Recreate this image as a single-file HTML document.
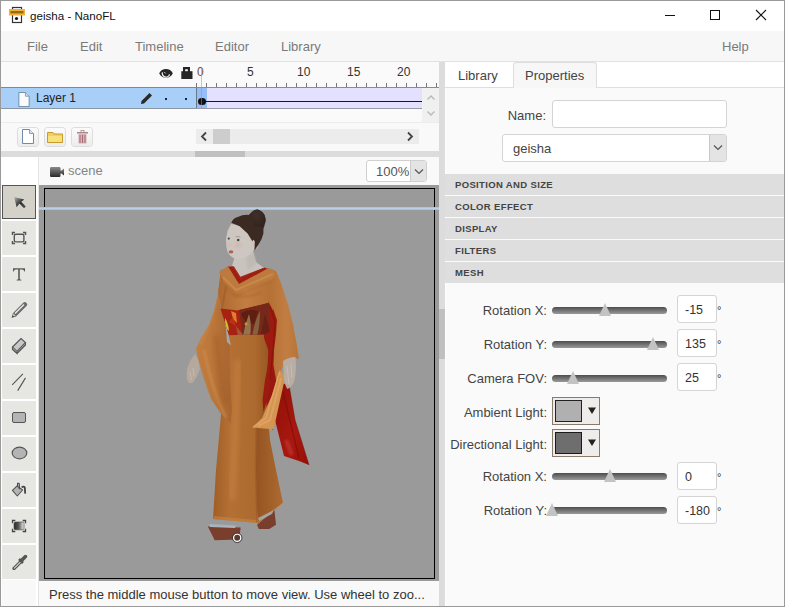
<!DOCTYPE html>
<html><head><meta charset="utf-8">
<style>
*{box-sizing:border-box;margin:0;padding:0}
html,body{width:785px;height:607px;overflow:hidden;background:#fff;font-family:"Liberation Sans",sans-serif}
.a{position:absolute}
#win{position:absolute;left:0;top:0;width:785px;height:607px;border:1px solid #9a9a9a;background:#fff;overflow:hidden}
.menu{position:absolute;top:39px;font-size:13px;color:#7a7a7a}
.tab{position:absolute;top:62px;height:26px;font-size:13px;color:#444}
.sec{position:absolute;left:445px;width:339px;height:21px;background:#dedede;font-size:9.5px;font-weight:bold;color:#444;padding-left:10px;line-height:22px;letter-spacing:0.35px}
.lbl{position:absolute;font-size:13px;color:#444;text-align:right}
.track{position:absolute;left:552px;width:115px;height:7px;border-radius:4px;background:linear-gradient(#4c4c4c,#707070 45%,#9a9a9a)}
.thumb{position:absolute;width:0;height:0;border-left:6px solid transparent;border-right:6px solid transparent;border-bottom:13px solid #c3c3c3}
.inp{position:absolute;left:677px;width:40px;height:28px;border:1px solid #d4d4d4;border-radius:3px;background:#fff;font-size:12.5px;color:#333;padding-left:7px;line-height:28px}
.deg{position:absolute;left:717px;font-size:11px;color:#333}
.tool{position:absolute;left:2px;width:34px;height:34px;background:#e6e6e2}
</style></head><body>

<!-- title bar -->
<div class="a" style="left:0;top:0;width:785px;height:31px;background:#fff"></div>
<svg class="a" style="left:8px;top:6px" width="20" height="18" viewBox="0 0 20 18">
 <rect x="4.5" y="1.5" width="9" height="15" fill="#fff" stroke="#333" stroke-width="1.2"/>
 <rect x="1" y="3" width="16" height="6.5" fill="#f2b234"/>
 <rect x="2.5" y="5" width="13" height="2.4" fill="#4a3008" opacity="0.55"/>
 <circle cx="8.5" cy="12.5" r="1.6" fill="#111"/>
</svg>
<div class="a" style="left:30px;top:9px;font-size:11.6px;color:#111">geisha - NanoFL</div>
<div class="a" style="left:665px;top:15px;width:10px;height:1px;background:#111"></div>
<div class="a" style="left:710px;top:10px;width:10px;height:10px;border:1px solid #111"></div>
<svg class="a" style="left:755px;top:9px" width="12" height="12" viewBox="0 0 12 12"><path d="M1 1L11 11M11 1L1 11" stroke="#111" stroke-width="1.1"/></svg>

<!-- menu bar -->
<div class="a" style="left:0;top:31px;width:785px;height:31px;background:#f7f7f7;border-bottom:1px solid #e2e2e2"></div>
<div class="menu" style="left:27px">File</div>
<div class="menu" style="left:80px">Edit</div>
<div class="menu" style="left:135px">Timeline</div>
<div class="menu" style="left:215px">Editor</div>
<div class="menu" style="left:281px">Library</div>
<div class="menu" style="left:722px">Help</div>

<!-- left: timeline -->
<div class="a" style="left:0;top:62px;width:439px;height:60px;background:#fafafa"></div>
<div class="a" style="left:0;top:122px;width:439px;height:29px;background:#f9f9f9;border-top:1px solid #ececec"></div>
<!-- eye -->
<svg class="a" style="left:159px;top:67.5px" width="14" height="11" viewBox="0 0 14 11">
 <path d="M0.2 5.3C2.3 -0.6 11.7 -0.6 13.8 5.3C11.7 11.2 2.3 11.2 0.2 5.3Z" fill="#262626"/>
 <path d="M3.4 4.3A3.7 3.7 0 0 0 10.6 6.3" stroke="#f2f2f2" stroke-width="1.3" fill="none"/>
 <path d="M5.3 4.1L6.6 5.4" stroke="#e0e0e0" stroke-width="1" fill="none"/>
</svg>
<!-- lock -->
<svg class="a" style="left:181px;top:66px" width="12" height="14" viewBox="0 0 12 14">
 <path d="M3.1 6V2.1H7.9V6" fill="none" stroke="#262626" stroke-width="2.2"/>
 <rect x="0.3" y="5.2" width="11.2" height="7.8" fill="#262626"/>
</svg>
<!-- ruler -->
<div class="a" style="left:196px;top:83px;width:1px;height:4px;background:#777"></div>
<div class="a" style="left:206px;top:83px;width:1px;height:4px;background:#777"></div>
<div class="a" style="left:216px;top:83px;width:1px;height:4px;background:#777"></div>
<div class="a" style="left:226px;top:83px;width:1px;height:4px;background:#777"></div>
<div class="a" style="left:236px;top:83px;width:1px;height:4px;background:#777"></div>
<div class="a" style="left:246px;top:83px;width:1px;height:4px;background:#777"></div>
<div class="a" style="left:256px;top:83px;width:1px;height:4px;background:#777"></div>
<div class="a" style="left:266px;top:83px;width:1px;height:4px;background:#777"></div>
<div class="a" style="left:276px;top:83px;width:1px;height:4px;background:#777"></div>
<div class="a" style="left:286px;top:83px;width:1px;height:4px;background:#777"></div>
<div class="a" style="left:296px;top:83px;width:1px;height:4px;background:#777"></div>
<div class="a" style="left:306px;top:83px;width:1px;height:4px;background:#777"></div>
<div class="a" style="left:316px;top:83px;width:1px;height:4px;background:#777"></div>
<div class="a" style="left:326px;top:83px;width:1px;height:4px;background:#777"></div>
<div class="a" style="left:336px;top:83px;width:1px;height:4px;background:#777"></div>
<div class="a" style="left:346px;top:83px;width:1px;height:4px;background:#777"></div>
<div class="a" style="left:356px;top:83px;width:1px;height:4px;background:#777"></div>
<div class="a" style="left:366px;top:83px;width:1px;height:4px;background:#777"></div>
<div class="a" style="left:376px;top:83px;width:1px;height:4px;background:#777"></div>
<div class="a" style="left:386px;top:83px;width:1px;height:4px;background:#777"></div>
<div class="a" style="left:396px;top:83px;width:1px;height:4px;background:#777"></div>
<div class="a" style="left:406px;top:83px;width:1px;height:4px;background:#777"></div>
<div class="a" style="left:416px;top:83px;width:1px;height:4px;background:#777"></div>
<div class="a" style="left:426px;top:83px;width:1px;height:4px;background:#777"></div>
<div class="a" style="left:436px;top:83px;width:1px;height:4px;background:#777"></div>
<div class="a" style="left:197px;top:65px;font-size:12px;color:#6a5048">0</div>
<div class="a" style="left:247px;top:65px;font-size:12px;color:#333">5</div>
<div class="a" style="left:297px;top:65px;font-size:12px;color:#333">10</div>
<div class="a" style="left:347px;top:65px;font-size:12px;color:#333">15</div>
<div class="a" style="left:397px;top:65px;font-size:12px;color:#333">20</div>
<!-- layer row -->
<div class="a" style="left:1px;top:87px;width:196px;height:22px;background:#a8cff8;border-top:1px solid #7a8a9a;border-bottom:1px solid #8a96a2"></div>
<div class="a" style="left:197px;top:87px;width:225px;height:22px;background:#e4e0ff;border-top:1px solid #8a8a9a;border-bottom:1px solid #9a9aaa"></div>
<div class="a" style="left:197px;top:88px;width:10px;height:20px;background:#96bdf5"></div>
<div class="a" style="left:196px;top:88px;width:1px;height:20px;background:#6a7888"></div>

<div class="a" style="left:205px;top:101px;width:217px;height:1px;background:#141438"></div>
<div class="a" style="left:198px;top:97.6px;width:7.6px;height:7.6px;border-radius:50%;background:#111"></div>
<div class="a" style="left:201px;top:67px;width:1px;height:41px;background:#d08478;opacity:0.55"></div>
<svg class="a" style="left:18px;top:91.5px" width="12" height="15" viewBox="0 0 12 16">
 <path d="M0.5 0.5H7.5L11.5 4.5V15.5H0.5Z" fill="#fbfbfb" stroke="#6a8aa8" stroke-width="1"/>
 <path d="M7.5 0.5V4.5H11.5" fill="#dde" stroke="#6a8aa8" stroke-width="0.8"/>
</svg>
<div class="a" style="left:36px;top:91px;font-size:12px;color:#222">Layer 1</div>
<svg class="a" style="left:140px;top:92px" width="13" height="13" viewBox="0 0 13 13">
 <path d="M1 12L1.5 9L9.5 1L12 3.5L4 11.5Z" fill="#2a2a2a"/>
</svg>
<div class="a" style="left:165px;top:98px;width:2px;height:2px;background:#223"></div>
<div class="a" style="left:185px;top:98px;width:2px;height:2px;background:#223"></div>
<!-- vertical scroll -->
<div class="a" style="left:422px;top:87px;width:17px;height:1px;background:#8a8a9a"></div>
<div class="a" style="left:422px;top:88px;width:17px;height:34px;background:#f0f0f0"></div>
<svg class="a" style="left:426px;top:92px" width="10" height="28" viewBox="0 0 10 28">
 <path d="M1.5 7.5L5 4L8.5 7.5" fill="none" stroke="#bbb" stroke-width="1.5"/>
 <path d="M1.5 19.5L5 23L8.5 19.5" fill="none" stroke="#bbb" stroke-width="1.5"/>
</svg>
<!-- toolbar buttons -->
<div class="a" style="left:18px;top:128px;width:20px;height:18px;border-radius:3px;background:linear-gradient(#fbfbfb,#ececec);box-shadow:0 0 0 1px #ddd"></div>
<div class="a" style="left:45px;top:128px;width:20px;height:18px;border-radius:3px;background:linear-gradient(#fbfbfb,#ececec);box-shadow:0 0 0 1px #ddd"></div>
<div class="a" style="left:72px;top:128px;width:20px;height:18px;border-radius:3px;background:linear-gradient(#fbfbfb,#ececec);box-shadow:0 0 0 1px #ddd"></div>
<svg class="a" style="left:22px;top:129px" width="12" height="15" viewBox="0 0 12 15">
 <path d="M0.5 0.5H7.5L11.5 4.5V14.5H0.5Z" fill="#fff" stroke="#6e8aa6" stroke-width="1"/>
 <path d="M7.5 0.5V4.5H11.5" fill="#e6e8ee" stroke="#6e8aa6" stroke-width="0.8"/>
</svg>
<svg class="a" style="left:47px;top:131px" width="16" height="12" viewBox="0 0 16 12">
 <path d="M0.5 1.5H6L7 3H15.5V11.5H0.5Z" fill="#f2d060" stroke="#c89a30" stroke-width="1"/>
 <rect x="1" y="5" width="14" height="6" fill="#f8e07a"/>
</svg>
<svg class="a" style="left:77px;top:130px" width="11" height="14" viewBox="0 0 11 14">
 <rect x="0" y="2" width="11" height="1.5" fill="#a88"/>
 <rect x="4" y="0.5" width="3" height="2" fill="none" stroke="#a88" stroke-width="0.8"/>
 <rect x="1.5" y="4" width="8" height="9.5" fill="#d8b0b6"/>
 <path d="M3 5V13M5.5 5V13M8 5V13" stroke="#a06870" stroke-width="0.9"/>
</svg>
<!-- h scrollbar -->
<div class="a" style="left:196px;top:129px;width:223px;height:15px;background:#ececec"></div>
<div class="a" style="left:213px;top:129px;width:17px;height:15px;background:#cdcdcd"></div>
<svg class="a" style="left:199px;top:131px" width="10" height="11" viewBox="0 0 10 11"><path d="M7 1.5L3 5.5L7 9.5" fill="none" stroke="#444" stroke-width="1.8"/></svg>
<svg class="a" style="left:405px;top:131px" width="10" height="11" viewBox="0 0 10 11"><path d="M3 1.5L7 5.5L3 9.5" fill="none" stroke="#444" stroke-width="1.8"/></svg>
<!-- splitter -->
<div class="a" style="left:1px;top:151px;width:438px;height:6px;background:#dcdcdc"></div>
<div class="a" style="left:195px;top:151px;width:50px;height:6px;background:#c0c0c0"></div>

<!-- scene header -->
<div class="a" style="left:39px;top:157px;width:400px;height:28px;background:#f9f9f9"></div>
<div class="a" style="left:1px;top:157px;width:37px;height:450px;background:#fff"></div>
<div class="a" style="left:38px;top:157px;width:1px;height:450px;background:#e4e4e4"></div>
<svg class="a" style="left:50px;top:166px" width="16" height="12" viewBox="0 0 16 12">
 <defs><linearGradient id="cam" x1="0" y1="0" x2="0" y2="1"><stop offset="0" stop-color="#8a8a8a"/><stop offset="1" stop-color="#2a2a2a"/></linearGradient> <clipPath id="csl"><path d="M222 270L219 290L214 311L209 325L201 338L196 349L199 362L203 376L211 399L222 415L230.5 423.5L232 410L230 380L229.4 343L224.5 321L221 309L218 292Z"/></clipPath>
</defs>
 <rect x="0" y="1" width="10.5" height="10" rx="1.2" fill="url(#cam)"/>
 <path d="M10 4.5H11.5L14 2.5V9.5L11.5 7.5H10Z" fill="url(#cam)"/>
</svg>
<div class="a" style="left:68px;top:163px;font-size:13px;color:#858585">scene</div>
<div class="a" style="left:366px;top:160px;width:61px;height:22px;border:1px solid #d0d0d0;border-radius:3px;background:#fff;overflow:hidden">
 <div class="a" style="left:9px;top:3px;font-size:13px;color:#555">100%</div>
 <div class="a" style="left:43px;top:0;width:17px;height:20px;background:#e4e4e4;border-left:1px solid #ccc"></div>
 <svg class="a" style="left:47px;top:7px" width="10" height="7" viewBox="0 0 10 7"><path d="M1 1.5L5 5.5L9 1.5" fill="none" stroke="#555" stroke-width="1.2"/></svg>
</div>

<!-- tools -->
<div class="a" style="left:2px;top:185px;width:34px;height:34px;background:#d4d2c8;border:1px solid #555"></div>
<svg class="a" style="left:12px;top:195px" width="16" height="16" viewBox="0 0 16 16"><defs><linearGradient id="ag" x1="0" y1="0" x2="1" y2="1"><stop offset="0" stop-color="#b8b8b8"/><stop offset="0.55" stop-color="#2e2e2e"/><stop offset="1" stop-color="#555"/></linearGradient></defs><path d="M2.2 1.9L12.3 4.4L9.2 6.8L13.8 11.4L12 13.2L7.4 8.6L4.6 12.3Z" fill="url(#ag)"/></svg>
<div class="tool" style="top:221px"></div>
<svg class="a" style="left:11px;top:231px" width="16" height="14" viewBox="0 0 16 14"><rect x="3.3" y="3.3" width="9.6" height="7.6" rx="1.6" fill="#e6e6e6" stroke="#555" stroke-width="1.4"/><path d="M1.5 4V1.5H4M12 1.5H14.5V4M14.5 10V12.5H12M4 12.5H1.5V10" fill="none" stroke="#555" stroke-width="1.5"/></svg>
<div class="tool" style="top:257px"></div>
<svg class="a" style="left:12px;top:267px" width="14" height="14" viewBox="0 0 14 14"><path d="M1 1.2H13V4.4H12.3Q12 2.6 10 2.6H7.8V12.1Q7.8 12.6 9.4 12.7V13.4H4.6V12.7Q6.2 12.6 6.2 12.1V2.6H4Q2 2.6 1.7 4.4H1Z" fill="#5a5a5a"/></svg>
<div class="tool" style="top:293px"></div>
<svg class="a" style="left:10px;top:300px" width="19" height="19" viewBox="0 0 19 19"><path d="M3 13L13.5 2.5Q15 1.5 16.5 3L17 3.5Q17.8 5 16.5 6L6 16.5Z" fill="#6a6a6a"/><path d="M5 13.5L14 4.5" stroke="#e8e8e8" stroke-width="1.5"/><path d="M3 13L6 16.5L1.5 18Z" fill="#555"/><path d="M3.2 14.5L4.7 16" stroke="#ddd" stroke-width="1.2"/></svg>
<div class="tool" style="top:329px"></div>
<svg class="a" style="left:11px;top:336px" width="16" height="19" viewBox="0 0 16 19"><path d="M1.5 11L10 2.5L14.5 6.5L6 15.5Z" fill="#c8c8c8" stroke="#555" stroke-width="1.1"/><path d="M1.5 11V13.5L6 17.5V15.5M6 17.5L14.5 9V6.5" fill="#999" stroke="#555" stroke-width="1.1"/></svg>
<div class="tool" style="top:365px"></div>
<svg class="a" style="left:10px;top:372px" width="18" height="20" viewBox="0 0 18 20"><path d="M2.2 12.8L12.9 1.8M7.7 18.6L15.5 5.9" stroke="#555" stroke-width="1.1"/></svg>
<div class="tool" style="top:401px"></div>
<div class="a" style="left:12px;top:412px;width:14px;height:11px;background:#b4b4b4;border:1.5px solid #555;border-radius:2px"></div>
<div class="tool" style="top:437px"></div>
<svg class="a" style="left:11px;top:446px" width="17" height="14" viewBox="0 0 17 14"><ellipse cx="8.5" cy="7" rx="7.3" ry="5.8" fill="#b4b4b4" stroke="#555" stroke-width="1.2"/></svg>
<div class="tool" style="top:473px"></div>
<svg class="a" style="left:11px;top:482px" width="17" height="16" viewBox="0 0 17 16"><path d="M1.4 8.3L6.1 4L11.6 8L6.3 14Z" fill="#b4b4b4" stroke="#555" stroke-width="1.1" stroke-linejoin="round"/><path d="M8.3 7.3V2.1Q8.3 1.3 7.5 1.3H6.6V4" fill="none" stroke="#444" stroke-width="1.1"/><path d="M10.6 5.2Q13.2 3.8 13.8 5.6L14.2 11.6" fill="none" stroke="#444" stroke-width="1.8"/></svg>
<div class="tool" style="top:509px"></div>
<svg class="a" style="left:11px;top:519px" width="16" height="14" viewBox="0 0 16 14"><defs><linearGradient id="gg" x1="0" y1="0" x2="1" y2="0"><stop offset="0" stop-color="#2a2a2a"/><stop offset="0.45" stop-color="#555"/><stop offset="1" stop-color="#f0f0f0"/></linearGradient></defs><rect x="3" y="3" width="10" height="7.8" rx="1.5" fill="url(#gg)" stroke="#444" stroke-width="0.6"/><path d="M1.5 4.3V1.5H4.3M11.7 1.5H14.5V4.3M14.5 9.7V12.5H11.7M4.3 12.5H1.5V9.7" fill="none" stroke="#444" stroke-width="1.3"/></svg>
<div class="tool" style="top:545px"></div>
<svg class="a" style="left:12px;top:552.5px" width="16" height="17" viewBox="0 0 16 17"><path d="M2 15.5L9 8.5" stroke="#555" stroke-width="3.2" stroke-linecap="round"/><path d="M2.3 15.2L8.5 9" stroke="#ccc" stroke-width="1.2" stroke-linecap="round"/><path d="M7 6L11 10" stroke="#555" stroke-width="2.5"/><path d="M10 7L13.5 3.5" stroke="#555" stroke-width="3.5" stroke-linecap="round"/></svg>

<div class="a" style="left:2px;top:580px;width:34px;height:26px;background:#f8f8f8"></div>
<!-- canvas -->
<div class="a" style="left:39px;top:185px;width:400px;height:396px;background:#9b9b9b"></div>
<div class="a" style="left:44px;top:188px;width:391px;height:391px;background:#9a9a9a;border:1px solid #000"></div>
<div class="a" style="left:39px;top:207px;width:400px;height:3px;background:linear-gradient(#a8bcd2,#b8d0ea 50%,#a8bcd2)"></div>
<svg id="fig" class="a" style="left:39px;top:185px" width="400" height="396" viewBox="39 185 400 396">
<defs>
 <filter id="b1" x="-50%" y="-50%" width="200%" height="200%"><feGaussianBlur stdDeviation="1.2"/></filter>
 <filter id="b2" x="-50%" y="-50%" width="200%" height="200%"><feGaussianBlur stdDeviation="2.5"/></filter>
 <filter id="b05" x="-50%" y="-50%" width="200%" height="200%"><feGaussianBlur stdDeviation="0.5"/></filter>
 <linearGradient id="skirtL" x1="0" y1="0" x2="1" y2="0"><stop offset="0" stop-color="#a05e26"/><stop offset="0.3" stop-color="#b47034"/><stop offset="0.75" stop-color="#ac6a30"/><stop offset="1" stop-color="#985622"/></linearGradient>
 <linearGradient id="skirtR" x1="0" y1="0" x2="1" y2="0"><stop offset="0" stop-color="#925222"/><stop offset="0.5" stop-color="#a05e28"/><stop offset="1" stop-color="#ae6a32"/></linearGradient>
 <linearGradient id="ribbon" x1="0" y1="0" x2="1" y2="1"><stop offset="0" stop-color="#8e1006"/><stop offset="0.6" stop-color="#a81810"/><stop offset="1" stop-color="#960e06"/></linearGradient>
 <linearGradient id="sleeveL" x1="0" y1="0" x2="1" y2="0"><stop offset="0" stop-color="#c27e40"/><stop offset="0.5" stop-color="#ba763a"/><stop offset="1" stop-color="#a66430"/></linearGradient>
 <linearGradient id="sleeveR" x1="0" y1="0" x2="1" y2="0"><stop offset="0" stop-color="#b47034"/><stop offset="0.6" stop-color="#c27e42"/><stop offset="1" stop-color="#b87436"/></linearGradient>
 <linearGradient id="torso" x1="0" y1="0" x2="1" y2="0"><stop offset="0" stop-color="#ac682e"/><stop offset="0.45" stop-color="#c27e42"/><stop offset="1" stop-color="#b06c30"/></linearGradient>
 <radialGradient id="bun" cx="0.4" cy="0.35" r="0.7"><stop offset="0" stop-color="#40302a"/><stop offset="1" stop-color="#30221c"/></radialGradient>
</defs>
<!-- red lining behind right side -->
<path d="M264 298L277 296L279 340L280 400L273 430L262 420L263 380L265 340Z" fill="#981810"/>
<!-- red ribbon -->
<path d="M281 383L289 385L295 420L309 465L299 461L284 456L275 420Z" fill="url(#ribbon)"/>
<path d="M283 392L299 458" stroke="#6e0804" stroke-width="1.2" opacity="0.5"/>
<path d="M286 440L292 455" stroke="#d04a44" stroke-width="4" opacity="0.45" filter="url(#b1)"/>
<path d="M289 385L295 420L309 465" stroke="#7a0a04" stroke-width="1" fill="none" opacity="0.5"/>
<!-- skirt right panel -->
<path d="M254 420L266 400L268 418L270 440L276 470L283 503L258 523L254 470Z" fill="url(#skirtR)"/>
<!-- skirt main -->
<path d="M229 334L269 331L268 360L266.5 380L264.5 400L261 420L256.5 426L256 470L257.5 523L213 519L216 470L220 426L224 380Z" fill="url(#skirtL)"/>
<path d="M214 516L257 520L257 523L213 519Z" fill="#c8843e" opacity="0.6"/>
<path d="M258 522L283 503" stroke="#d49050" stroke-width="1" opacity="0.6"/>
<path d="M238 360Q236 420 232 500" stroke="#cc8846" stroke-width="6" fill="none" opacity="0.5" filter="url(#b2)"/>
<path d="M256 426L255.5 470L257 523" stroke="#9a5820" stroke-width="1.5" fill="none" opacity="0.5" filter="url(#b05)"/>
<!-- left sleeve drape -->
<path d="M222 270L219 290L214 311L209 325L201 338L196 349L199 362L203 376L211 399L222 415L230.5 423.5L232 410L230 380L229.4 343L224.5 321L221 309L218 292Z" fill="url(#sleeveL)"/>
<g clip-path="url(#csl)"><path d="M204 350Q212 390 226 418" stroke="#d89450" stroke-width="3" fill="none" opacity="0.45" filter="url(#b1)"/></g>
<g clip-path="url(#csl)"><path d="M216 335Q219 370 226 405" stroke="#a05c26" stroke-width="7" fill="none" opacity="0.45" filter="url(#b2)"/></g>
<g clip-path="url(#csl)"><path d="M219 290Q212 320 200 345" stroke="#d08c4a" stroke-width="4" fill="none" opacity="0.4" filter="url(#b1)"/></g>
<!-- gap triangle -->
<path d="M225.5 323L231 345.5L227 342Z" fill="#a8a8a8"/>
<!-- torso -->
<path d="M221 269L237 283L267 269L276 272L280 285L274 300L270 332L229 336L222 312L218 293Z" fill="url(#torso)"/>
<path d="M232 294Q246 300 262 292" stroke="#a86428" stroke-width="2.5" fill="none" opacity="0.45" filter="url(#b1)"/>
<path d="M226 286L222 308" stroke="#9c5a24" stroke-width="2" opacity="0.5" filter="url(#b05)"/>
<!-- red band -->
<path d="M268.6 302L277.5 320L276.5 334L274.5 350L274 365L271 382L267 400L263.5 412L262.5 400L265 380L268 365L269 352L264 338L264 329.5Z" fill="#9c1a10"/>
<path d="M270 306L275 322L273 350L270 380" stroke="#7a0e06" stroke-width="1.5" fill="none" opacity="0.4" filter="url(#b05)"/>
<!-- right sleeve -->
<path d="M268 268L276 271L281 283L288.5 306L293 324.6L296.5 343L299 359L293 357L284 362L281 372L278 392L273.5 365L274 350L276 334L277 320L270 300L270 290Z" fill="url(#sleeveR)"/>

<!-- right sleeve tip -->
<path d="M279.5 370L285.3 376.6L273.7 429.3L252.3 427.6L262 418L272 395Z" fill="#d49452"/>
<path d="M281 378L270 420L258 426" stroke="#e8b070" stroke-width="2" fill="none" opacity="0.5" filter="url(#b05)"/>
<path d="M279.5 372L266 418L253 427" stroke="#e8b070" stroke-width="1.5" fill="none" opacity="0.6"/>
<!-- obi -->
<clipPath id="cobi"><path d="M220.4 308.6Q230 309.5 237.2 310.4Q252 307 268.9 302.7L270 331.7L264.3 334.4L229 335.3Z"/></clipPath>
<path d="M220.4 308.6Q230 309.5 237.2 310.4Q252 307 268.9 302.7L270 331.7L264.3 334.4L229 335.3Z" fill="#a82212"/>
<g clip-path="url(#cobi)">
<path d="M238 300L272 296L272 340L243 340Z" fill="#76281a"/>
<path d="M241 314Q248 308 258 311L254 324L245 321Z" fill="#5a1a10" opacity="0.8" filter="url(#b05)"/>
<path d="M243 336Q245 324 249 314Q252 325 250 336Z" fill="#9a8254" opacity="0.85" filter="url(#b05)"/>
<path d="M252 336Q255 320 260 311Q260 326 257 336Z" fill="#8a7048" opacity="0.8" filter="url(#b05)"/>
<path d="M236 326Q240 331 244 336L238 336Z" fill="#a07a50" opacity="0.6"/>
<circle cx="246" cy="324" r="1.4" fill="#d8a048" opacity="0.8"/>
<path d="M261 334L265 314L271 334Z" fill="#5e2012" opacity="0.7"/>
<path d="M225 318Q228 322 229 331L225.5 328Z" fill="#c8c830" filter="url(#b05)"/>
<path d="M231 311L236 313L237 323L233 319Z" fill="#e0802a" filter="url(#b05)"/>
<path d="M229 322L233 316L236 326Z" fill="#c83c1c" opacity="0.6"/>
</g>
<!-- shawl collar (lighter) -->
<path d="M219 272L228 266L240 284L268 268L277 272L272 280L236 292L224 282Z" fill="#bc7a3e"/>
<path d="M223 277L236 290L273 274" stroke="#d8964e" stroke-width="2" fill="none" opacity="0.5" filter="url(#b05)"/>
<path d="M222 284L236 296L274 280" stroke="#a86630" stroke-width="2" fill="none" opacity="0.4" filter="url(#b1)"/>
<!-- neck -->
<path d="M235 256L253 251L256 262L264 268L240 278L232 266Z" fill="#c9c3bd"/>
<path d="M246 256L254 253L257 263L248 270Z" fill="#b8b2ac" opacity="0.5" filter="url(#b1)"/>
<!-- red collar band -->
<path d="M228 266.5L233.8 266.3L240.4 276.8L263.2 267.9L268 268.3L239 284Z" fill="#a82416"/>
<path d="M231 267.5L239.5 281L265.5 268.2" stroke="#7e1408" stroke-width="3" fill="none" stroke-dasharray="1 1.3" opacity="0.55"/>
<!-- face -->
<path d="M231 224L244 226L251 233L255 242L254 250L248 256L241 259L235 259L230.5 256L227.5 252L226.3 246L226 239L227.5 231Z" fill="#cec6c0"/>
<ellipse cx="238" cy="245" rx="3.5" ry="3" fill="#d4aaa4" opacity="0.45" filter="url(#b1)"/>
<ellipse cx="229.5" cy="245" rx="2" ry="2.5" fill="#d4aaa4" opacity="0.35" filter="url(#b1)"/>
<ellipse cx="231" cy="251.8" rx="2.4" ry="1.6" fill="#b0605c"/>
<circle cx="238.2" cy="240" r="1.3" fill="#3a4a48"/>
<circle cx="228.8" cy="238.6" r="1.1" fill="#3e4a4a"/>
<path d="M235.5 236.8Q238 236 240.5 237" stroke="#9a8a80" stroke-width="0.7" fill="none"/>
<!-- ear -->
<ellipse cx="255.5" cy="244.5" rx="2.6" ry="4.2" fill="#cfc2ba"/>
<!-- hair -->
<path d="M231.3 222.8Q233 218 237.7 216.9Q243 214.5 248.6 214.9L252 212Q255 209.4 257.5 209.4Q262 210.5 264.5 215Q266 219 265.4 221.8Q264.5 226 263.4 229L263.4 233.6Q262 240 258.5 244.5L254.5 250.5L254.8 241.5Q253 238 252.5 241.6L247.6 233.6L239.7 226.2Z" fill="#3a2a22"/>
<path d="M250 214Q254 209.4 257.5 209.4Q262 210.5 264.5 215Q266 219 265.4 221.8L263 227L255 226Z" fill="url(#bun)" opacity="0.9"/>
<!-- left hand -->
<path d="M195 354Q190 360 187 369Q186 378 188 382Q191 384.5 193.5 382Q198 376 200 369Q199 360 195 354Z" fill="#b8aa9c" opacity="0.9"/>
<path d="M190 372L191.5 380M193 368L194 376" stroke="#d8cec2" stroke-width="0.8" opacity="0.6"/>
<!-- right hand -->
<path d="M283 361Q289 357 295.4 357Q297 370 294 382Q291 388 287.3 389Q284 384 284 376Z" fill="#bcb0a4" opacity="0.92"/>
<path d="M287 366L289 384M291 364L292 378" stroke="#dcd2c8" stroke-width="0.8" opacity="0.5"/>
<!-- feet -->
<path d="M207.8 526.5L240.7 527.4L239 539.5L214.7 540.3Z" fill="#7a3e2c"/>
<path d="M209.5 524L236 525.5L235 528L210 527Z" fill="#a8b4bc"/>
<path d="M257 524.8L274.4 510L276 524.8L269.2 529L258.8 529Z" fill="#7a3e2c"/>
<path d="M258 518L274 510L272 514L259 521Z" fill="#a8b4bc" opacity="0.8"/>
<circle cx="237.2" cy="537.8" r="3.6" fill="#5a3a30" stroke="#fff" stroke-width="1.3"/>
<circle cx="237.2" cy="537.8" r="4.8" fill="none" stroke="#333" stroke-width="0.8"/>
</svg>

<!-- status -->
<div class="a" style="left:39px;top:581px;width:400px;height:26px;background:#f9f9f9"></div>
<div class="a" style="left:49px;top:587px;font-size:13px;color:#333;white-space:nowrap">Press the middle mouse button to move view. Use wheel to zoo...</div>

<!-- divider -->
<div class="a" style="left:439px;top:62px;width:6px;height:545px;background:#dcdcdc"></div>
<div class="a" style="left:439px;top:309px;width:6px;height:50px;background:#c0c0c0"></div>

<!-- right panel -->
<div class="a" style="left:445px;top:62px;width:339px;height:26px;background:#fff;border-bottom:1px solid #dedede"></div>
<div class="a" style="left:513px;top:62px;width:84px;height:26px;background:#f7f7f7;border:1px solid #dedede;border-bottom:none;border-radius:3px 3px 0 0"></div>
<div class="tab" style="left:458px;top:68px">Library</div>
<div class="tab" style="left:525px;top:68px">Properties</div>
<div class="a" style="left:445px;top:88px;width:339px;height:519px;background:#fafafa;border-left:1px solid #fff"></div>
<div class="lbl" style="left:480px;top:108px;width:66px">Name:</div>
<div class="a" style="left:552px;top:100px;width:175px;height:28px;border:1px solid #d4d4d4;border-radius:3px;background:#fff"></div>
<div class="a" style="left:502px;top:134px;width:225px;height:28px;border:1px solid #d4d4d4;border-radius:3px;background:#fff;overflow:hidden">
 <div class="a" style="left:10px;top:6px;font-size:13px;color:#444">geisha</div>
 <div class="a" style="left:206px;top:0;width:18px;height:26px;background:#e4e4e4;border-left:1px solid #c8c8c8"></div>
 <svg class="a" style="left:210px;top:9px" width="10" height="7" viewBox="0 0 10 7"><path d="M1 1.5L5 5.5L9 1.5" fill="none" stroke="#555" stroke-width="1.2"/></svg>
</div>
<div class="sec" style="top:174px">POSITION AND SIZE</div>
<div class="sec" style="top:196px">COLOR EFFECT</div>
<div class="sec" style="top:218px">DISPLAY</div>
<div class="sec" style="top:240px">FILTERS</div>
<div class="sec" style="top:262px">MESH</div>

<div class="lbl" style="left:447px;top:303px;width:100px">Rotation X:</div>
<div class="track" style="top:307px"></div><div class="thumb" style="left:599px;top:303px"></div>
<div class="inp" style="top:295px">-15</div><div class="deg" style="top:304px">°</div>

<div class="lbl" style="left:447px;top:337px;width:100px">Rotation Y:</div>
<div class="track" style="top:341px"></div><div class="thumb" style="left:647px;top:337px"></div>
<div class="inp" style="top:329px">135</div><div class="deg" style="top:338px">°</div>

<div class="lbl" style="left:447px;top:371px;width:100px">Camera FOV:</div>
<div class="track" style="top:375px"></div><div class="thumb" style="left:567px;top:371px"></div>
<div class="inp" style="top:363px">25</div><div class="deg" style="top:372px">°</div>

<div class="lbl" style="left:440px;top:405px;width:107px">Ambient Light:</div>
<div class="a" style="left:552px;top:397px;width:48px;height:28px;background:#efedeb;border:1px solid #8a7a6a"></div>
<div class="a" style="left:555px;top:400px;width:27px;height:22px;background:#b0b0b0;border:1px solid #222"></div>
<svg class="a" style="left:587px;top:406px" width="10" height="9" viewBox="0 0 10 9"><path d="M1 1.5H9L5 8Z" fill="#222"/></svg>

<div class="lbl" style="left:440px;top:437px;width:107px">Directional Light:</div>
<div class="a" style="left:552px;top:429px;width:48px;height:28px;background:#efedeb;border:1px solid #8a7a6a"></div>
<div class="a" style="left:555px;top:432px;width:27px;height:22px;background:#6e6e6e;border:1.5px solid #1a1a1a"></div>
<svg class="a" style="left:587px;top:438px" width="10" height="9" viewBox="0 0 10 9"><path d="M1 1.5H9L5 8Z" fill="#222"/></svg>

<div class="lbl" style="left:447px;top:469px;width:100px">Rotation X:</div>
<div class="track" style="top:473px"></div><div class="thumb" style="left:604px;top:469px"></div>
<div class="inp" style="top:462px">0</div><div class="deg" style="top:471px">°</div>

<div class="lbl" style="left:447px;top:503px;width:100px">Rotation Y:</div>
<div class="track" style="top:507px"></div><div class="thumb" style="left:546px;top:503px"></div>
<div class="inp" style="top:496px">-180</div><div class="deg" style="top:505px">°</div>

<!-- window borders -->
<div class="a" style="left:0;top:0;width:785px;height:1px;background:#9a9a9a"></div>
<div class="a" style="left:0;top:0;width:1px;height:607px;background:#9a9a9a"></div>
<div class="a" style="left:784px;top:0;width:1px;height:607px;background:#9a9a9a"></div>
<div class="a" style="left:0;top:606px;width:785px;height:1px;background:#9a9a9a"></div>

</body></html>
